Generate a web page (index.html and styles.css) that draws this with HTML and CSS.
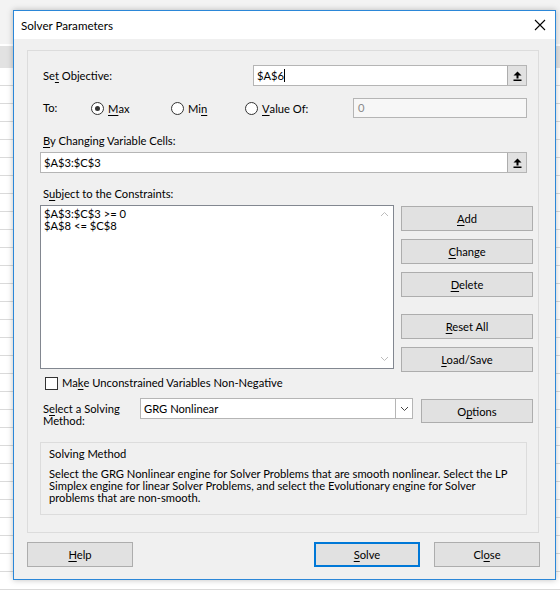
FILE: index.html
```html
<!DOCTYPE html>
<html lang="en">
<head>
  <meta charset="UTF-8" />
  <title>Solver Parameters</title>
  <link rel="stylesheet" href="styles.css">
</head>
<body>

  <div class="dialog">
    <div class="titlebar">
      <span class="title">Solver Parameters</span>
      <svg class="close" width="12" height="12" viewBox="0 0 12 12">
        <path d="M1 1 L11 11 M11 1 L1 11" stroke="#000" stroke-width="1.1" fill="none"/>
      </svg>
    </div>

    <div class="client">
      <div class="frame">

        <!-- objective -->
        <div class="row objective">
          <span class="label">Se<u>t</u> Objective:</span>
          <div class="refedit obj-edit">
            <span class="val">$A$6<span class="caret"></span></span>
            <span class="collapse">
              <svg width="9" height="10" viewBox="0 0 9 10"><path d="M4.5 0.5 L8.5 4.5 L5.5 4.5 L5.5 7.5 L3.5 7.5 L3.5 4.5 L0.5 4.5 Z" fill="#000"/><rect x="0.5" y="8.5" width="8" height="1.5" fill="#000"/></svg>
            </span>
          </div>
        </div>

        <!-- to -->
        <div class="row to-row">
          <span class="label">To:</span>
          <label class="radio r-max"><span class="dot on"></span><u>M</u>ax</label>
          <label class="radio r-min"><span class="dot"></span>Mi<u>n</u></label>
          <label class="radio r-val"><span class="dot"></span><u>V</u>alue Of:</label>
          <div class="value-box">0</div>
        </div>

        <div class="label block by-label"><u>B</u>y Changing Variable Cells:</div>
        <div class="refedit cells-edit">
          <span class="val">$A$3:$C$3</span>
          <span class="collapse">
            <svg width="9" height="10" viewBox="0 0 9 10"><path d="M4.5 0.5 L8.5 4.5 L5.5 4.5 L5.5 7.5 L3.5 7.5 L3.5 4.5 L0.5 4.5 Z" fill="#000"/><rect x="0.5" y="8.5" width="8" height="1.5" fill="#000"/></svg>
          </span>
        </div>

        <div class="label block subj-label">S<u>u</u>bject to the Constraints:</div>
        <div class="constraints">
          <div class="listbox">
            <div class="items">
              <div>$A$3:$C$3 &gt;= 0</div>
              <div>$A$8 &lt;= $C$8</div>
            </div>
            <div class="scroll">
              <svg width="9" height="6" viewBox="0 0 9 6"><path d="M1 5 L4.5 1.5 L8 5" stroke="#bcbcbc" fill="none"/></svg>
              <svg width="9" height="6" viewBox="0 0 9 6"><path d="M1 1 L4.5 4.5 L8 1" stroke="#bcbcbc" fill="none"/></svg>
            </div>
          </div>
          <div class="side-buttons">
            <button class="btn"><u>A</u>dd</button>
            <button class="btn"><u>C</u>hange</button>
            <button class="btn"><u>D</u>elete</button>
            <button class="btn gap"><u>R</u>eset All</button>
            <button class="btn"><u>L</u>oad/Save</button>
          </div>
        </div>

        <label class="check-row"><span class="checkbox"></span>Ma<u>k</u>e Unconstrained Variables Non-Negative</label>

        <div class="row method-row">
          <span class="label method-label">S<u>e</u>lect a Solving<br>Method:</span>
          <div class="combo">
            <span class="val">GRG Nonlinear</span>
            <span class="drop">
              <svg width="9" height="6" viewBox="0 0 9 6"><path d="M1 1 L4.5 4.5 L8 1" stroke="#444" fill="none"/></svg>
            </span>
          </div>
          <button class="btn options">O<u>p</u>tions</button>
        </div>

        <div class="groupbox">
          <div class="group-title">Solving Method</div>
          <p class="group-text">Select the GRG Nonlinear engine for Solver Problems that are smooth nonlinear. Select the LP<br>Simplex engine for linear Solver Problems, and select the Evolutionary engine for Solver<br>problems that are non-smooth.</p>
        </div>

      </div>

      <div class="footer">
        <button class="btn foot"><u>H</u>elp</button>
        <div class="foot-right">
          <button class="btn foot default"><u>S</u>olve</button>
          <button class="btn foot">Cl<u>o</u>se</button>
        </div>
      </div>
    </div>
  </div>

</body>
</html>
```

FILE: styles.css
```css
body {
  margin: 0;
  height: 590px;
  overflow: hidden;
  font-family: Lato, "Liberation Sans", Arial, sans-serif;
  font-size: 11.2px;
  color: #000;
  background:
    linear-gradient(#f3f3f3, #f3f3f3) 0 0 / 100% 44px no-repeat,
    linear-gradient(#e2e2e2, #e2e2e2) 0 46px / 100% 22px no-repeat,
    repeating-linear-gradient(#fff 0 17px, #dadada 17px 18px) 0 68px / 100% 600px no-repeat,
    #fff;
}

.dialog {
  margin: 10px 0 0 13px;
  width: 541px;
  height: 568px;
  border: 1px solid #2b87d8;
  background: #f0f0f0;
  box-shadow: 0 0 6px rgba(0, 0, 0, 0.25);
}

.titlebar {
  height: 28px;
  background: #fff;
  display: flex;
  align-items: center;
  justify-content: space-between;
  padding: 0 9px 0 7px;
}

.title {
  font-size: 11.6px;
}

.client {
  padding: 11px 0 0 13px;
}

.frame {
  width: 487px;
  height: 467px;
  border: 1px solid #dcdcdc;
  padding: 14px 11px 0 12px;
}

u {
  text-decoration: underline;
  text-underline-offset: 2px;
}

.label {
  padding-left: 3px;
  line-height: 16px;
}

.block {
  display: block;
}

.row {
  display: flex;
  align-items: center;
}

/* reference edit boxes */
.refedit {
  display: flex;
  align-items: stretch;
  height: 21px;
  box-sizing: border-box;
  border: 1px solid #b5b5b5;
  background: #fff;
}

.refedit .val {
  flex: 1;
  padding-left: 3px;
  line-height: 19px;
}

.caret {
  display: inline-block;
  width: 1px;
  height: 13px;
  background: #000;
  vertical-align: -2px;
}

.collapse {
  width: 18px;
  background: #e1e1e1;
  border-left: 1px solid #adadad;
  display: flex;
  align-items: center;
  justify-content: center;
}

.objective {
  height: 21px;
}

.objective .label {
  width: 210px;
}

.obj-edit {
  margin-left: auto;
  width: 274px;
}

.to-row {
  margin-top: 12px;
  height: 20px;
}

.to-row .label {
  width: 48px;
}

.radio {
  display: flex;
  align-items: center;
}

.dot {
  width: 11px;
  height: 11px;
  border: 1px solid #333;
  border-radius: 50%;
  margin-right: 4px;
  position: relative;
  background: #fff;
}

.dot.on::after {
  content: "";
  position: absolute;
  left: 3px;
  top: 3px;
  width: 5px;
  height: 5px;
  border-radius: 50%;
  background: #333;
}

.r-max {
  width: 80px;
}

.r-min {
  width: 74px;
}

.value-box {
  margin-left: auto;
  width: 174px;
  height: 20px;
  box-sizing: border-box;
  border: 1px solid #b5b5b5;
  background: #f7f7f7;
  color: #8a8a8a;
  padding-left: 4px;
  line-height: 17px;
}

.by-label {
  margin-top: 15px;
}

.cells-edit {
  margin-top: 3px;
  height: 21px;
}

.subj-label {
  margin-top: 13px;
}

.constraints {
  margin-top: 3px;
  display: flex;
  gap: 7px;
  width: 493px;
  height: 167px;
}

.listbox {
  flex-shrink: 0;
  width: 354px;
  height: 164px;
  box-sizing: border-box;
  border: 1px solid #828790;
  background: #fff;
  display: flex;
}

.items {
  flex: 1;
  padding: 2px 3px;
  line-height: 12px;
}

.scroll {
  width: 17px;
  display: flex;
  flex-direction: column;
  justify-content: space-between;
  align-items: center;
  padding: 5px 0 6px;
}

.side-buttons {
  flex-shrink: 0;
  display: flex;
  flex-direction: column;
  gap: 8px;
  padding-top: 1px;
}

.btn {
  font-family: inherit;
  font-size: 11.2px;
  color: #000;
  background: #e1e1e1;
  border: 1px solid #adadad;
  height: 25px;
  padding: 0;
  width: 132px;
}

.side-buttons .gap {
  margin-top: 9px;
}

.check-row {
  display: flex;
  align-items: center;
  margin: 4px 0 0 5px;
  height: 13px;
}

.checkbox {
  width: 11px;
  height: 11px;
  border: 1px solid #333;
  background: #fff;
  margin-right: 4px;
  position: relative;
  top: 1px;
}

.method-row {
  margin-top: 9px;
  align-items: flex-start;
  height: 25px;
}

.method-label {
  flex-shrink: 0;
  width: 97px;
  line-height: 12px;
  margin-top: 5px;
}

.combo {
  flex-shrink: 0;
  width: 273px;
  height: 21px;
  box-sizing: border-box;
  border: 1px solid #b5b5b5;
  background: #fff;
  display: flex;
}

.combo .val {
  flex: 1;
  padding-left: 3px;
  line-height: 19px;
}

.drop {
  width: 16px;
  border-left: 1px solid #b5b5b5;
  display: flex;
  align-items: center;
  justify-content: center;
}

.options {
  flex-shrink: 0;
  margin-left: 8px;
  margin-top: 1px;
  width: 112px;
  height: 24px;
}

.groupbox {
  margin-top: 19px;
  width: 487px;
  height: 73px;
  box-sizing: border-box;
  border: 1px solid #dcdcdc;
  padding: 5px 8px 0;
}

.group-title {
  line-height: 12px;
}

.group-text {
  margin: 8px 0 0;
  line-height: 12px;
  white-space: nowrap;
}

.footer {
  display: flex;
  justify-content: space-between;
  margin-top: 9px;
  width: 513px;
}

.foot {
  width: 106px;
  height: 25px;
}

.foot-right {
  display: flex;
  gap: 14px;
}

.default {
  border: 1px solid #0078d7;
  box-shadow: inset 0 0 0 1px #0078d7;
}
```
